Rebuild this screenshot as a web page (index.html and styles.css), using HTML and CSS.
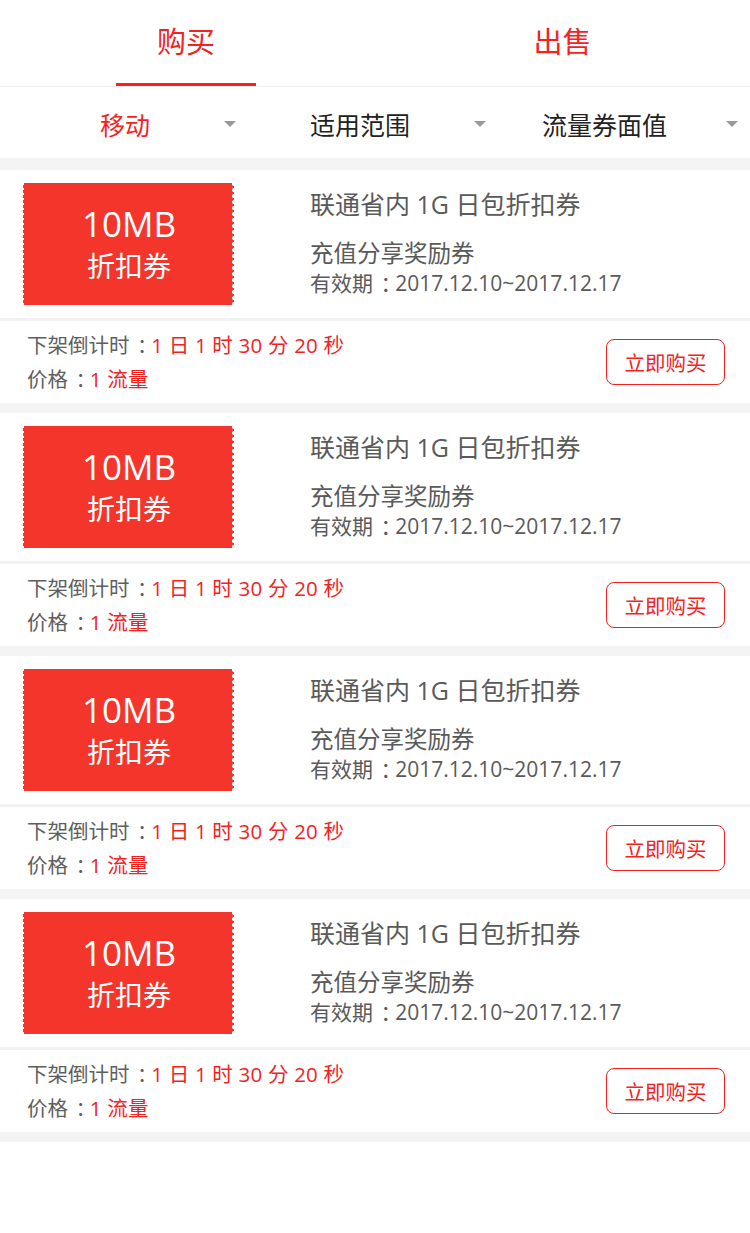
FILE: index.html
```html
<!DOCTYPE html>
<html lang="zh-CN">
<head>
<meta charset="utf-8">
<title>流量券</title>
<link rel="stylesheet" href="styles.css">
</head>
<body>
<div class="tabs">
  <div class="tab active"><span class="tab-label">购买</span></div>
  <div class="tab"><span class="tab-label">出售</span></div>
</div>
<div class="filters">
  <div class="filter f1 on"><span class="filter-text">移动</span><i class="caret"></i></div>
  <div class="filter f2"><span class="filter-text">适用范围</span><i class="caret"></i></div>
  <div class="filter f3"><span class="filter-text">流量券面值</span><i class="caret"></i></div>
</div>
<div class="list">
  <div class="card">
    <div class="card-top">
      <div class="ticket"><div class="ticket-amount">10MB</div><div class="ticket-kind">折扣券</div></div>
      <div class="info">
        <div class="info-title">联通省内 1G 日包折扣券</div>
        <div class="info-sub">充值分享奖励券</div>
        <div class="info-date">有效期<span class="colon">：</span>2017.12.10~2017.12.17</div>
      </div>
    </div>
    <div class="card-bottom">
      <div class="meta">
        <div class="meta-line">下架倒计时<span class="colon">：</span><span class="hl">1 日 1 时 30 分 20 秒</span></div>
        <div class="meta-line">价格<span class="colon">：</span><span class="hl">1 流量</span></div>
      </div>
      <button class="buy">立即购买</button>
    </div>
  </div>
  <div class="card">
    <div class="card-top">
      <div class="ticket"><div class="ticket-amount">10MB</div><div class="ticket-kind">折扣券</div></div>
      <div class="info">
        <div class="info-title">联通省内 1G 日包折扣券</div>
        <div class="info-sub">充值分享奖励券</div>
        <div class="info-date">有效期<span class="colon">：</span>2017.12.10~2017.12.17</div>
      </div>
    </div>
    <div class="card-bottom">
      <div class="meta">
        <div class="meta-line">下架倒计时<span class="colon">：</span><span class="hl">1 日 1 时 30 分 20 秒</span></div>
        <div class="meta-line">价格<span class="colon">：</span><span class="hl">1 流量</span></div>
      </div>
      <button class="buy">立即购买</button>
    </div>
  </div>
  <div class="card">
    <div class="card-top">
      <div class="ticket"><div class="ticket-amount">10MB</div><div class="ticket-kind">折扣券</div></div>
      <div class="info">
        <div class="info-title">联通省内 1G 日包折扣券</div>
        <div class="info-sub">充值分享奖励券</div>
        <div class="info-date">有效期<span class="colon">：</span>2017.12.10~2017.12.17</div>
      </div>
    </div>
    <div class="card-bottom">
      <div class="meta">
        <div class="meta-line">下架倒计时<span class="colon">：</span><span class="hl">1 日 1 时 30 分 20 秒</span></div>
        <div class="meta-line">价格<span class="colon">：</span><span class="hl">1 流量</span></div>
      </div>
      <button class="buy">立即购买</button>
    </div>
  </div>
  <div class="card">
    <div class="card-top">
      <div class="ticket"><div class="ticket-amount">10MB</div><div class="ticket-kind">折扣券</div></div>
      <div class="info">
        <div class="info-title">联通省内 1G 日包折扣券</div>
        <div class="info-sub">充值分享奖励券</div>
        <div class="info-date">有效期<span class="colon">：</span>2017.12.10~2017.12.17</div>
      </div>
    </div>
    <div class="card-bottom">
      <div class="meta">
        <div class="meta-line">下架倒计时<span class="colon">：</span><span class="hl">1 日 1 时 30 分 20 秒</span></div>
        <div class="meta-line">价格<span class="colon">：</span><span class="hl">1 流量</span></div>
      </div>
      <button class="buy">立即购买</button>
    </div>
  </div>
</div>
</body>
</html>
```
FILE: styles.css
```css
* { box-sizing: border-box; }
body {
  margin: 0;
  background: #fff;
  font-family: "Open Sans", "Noto Sans CJK SC", sans-serif;
  color: #555;
}
.colon {
  padding-left: 0.36em;
  letter-spacing: -0.3em;
}
.tabs {
  display: flex;
  height: 87px;
  border-bottom: 1px solid #eeeeee;
}
.tab {
  flex: 1;
  display: flex;
  justify-content: center;
}
.tab-label {
  width: 140px;
  height: 86px;
  padding-top: 24px;
  text-align: center;
  font-size: 29px;
  line-height: 36px;
  color: #f2231f;
}
.tab.active .tab-label {
  border-bottom: 3px solid #f2231f;
  margin-left: -3px;
}
.filters {
  display: grid;
  grid-template-columns: repeat(3, 1fr);
  height: 71px;
}
.filter {
  display: flex;
  align-items: center;
  padding-top: 3px;
  font-size: 25px;
  color: #222;
}
.filter.on { color: #f2231f; }
.f1 { padding-left: 100px; padding-right: 14px; }
.f2 { padding-left: 60px; padding-right: 14px; }
.f3 { padding-left: 42px; padding-right: 12px; }
.caret {
  margin-left: auto;
  width: 0;
  height: 0;
  border-left: 6px solid transparent;
  border-right: 6px solid transparent;
  border-top: 6px solid #999;
}
.list {
  background: #f4f4f4;
  padding: 12px 0 10px;
  display: flex;
  flex-direction: column;
  gap: 10px;
}
.card { background: #fff; }
.card-top {
  display: flex;
  height: 151px;
  padding: 13px 0 13px 23px;
  border-bottom: 3px solid #f2f2f2;
}
.ticket {
  position: relative;
  width: 208px;
  height: 122px;
  margin-left: 1px;
  background: #f3352b;
  color: #fff;
  display: flex;
  flex-direction: column;
  align-items: center;
  justify-content: center;
  padding-left: 2px;
}
.ticket::before,
.ticket::after {
  content: "";
  position: absolute;
  top: 0;
  bottom: 0;
  width: 3px;
  background: radial-gradient(circle at 50% 50%, #f3352b 1.3px, rgba(243,53,43,0) 1.8px) 0 1px / 3px 6px repeat-y;
}
.ticket::after { right: -2px; }
.ticket::before { left: -1px; width: 2px; background-size: 2px 5px; }
.ticket-amount {
  font-size: 35px;
  line-height: 44px;
}
.ticket-kind {
  font-size: 28px;
  line-height: 40px;
}
.info {
  margin-left: 78px;
  padding-top: 5px;
  color: #5a5a5a;
}
.info-title {
  font-size: 25px;
  line-height: 32px;
}
.info-sub {
  margin-top: 18px;
  font-size: 23.5px;
  line-height: 30px;
}
.info-date {
  margin-top: 1px;
  font-size: 21px;
  line-height: 28px;
}
.card-bottom {
  height: 82px;
  display: flex;
  align-items: center;
  justify-content: space-between;
  padding: 0 25px 0 27px;
}
.meta-line {
  font-size: 20.5px;
  line-height: 34px;
  color: #5e5e5e;
}
.hl { color: #f2231f; letter-spacing: 0.2px; }
.buy {
  width: 119px;
  height: 46px;
  border: 1.5px solid #f2231f;
  border-radius: 8px;
  background: #fff;
  color: #f2231f;
  font-family: "Open Sans", "Noto Sans CJK SC", sans-serif;
  font-size: 20.5px;
  padding: 0;
}
```
